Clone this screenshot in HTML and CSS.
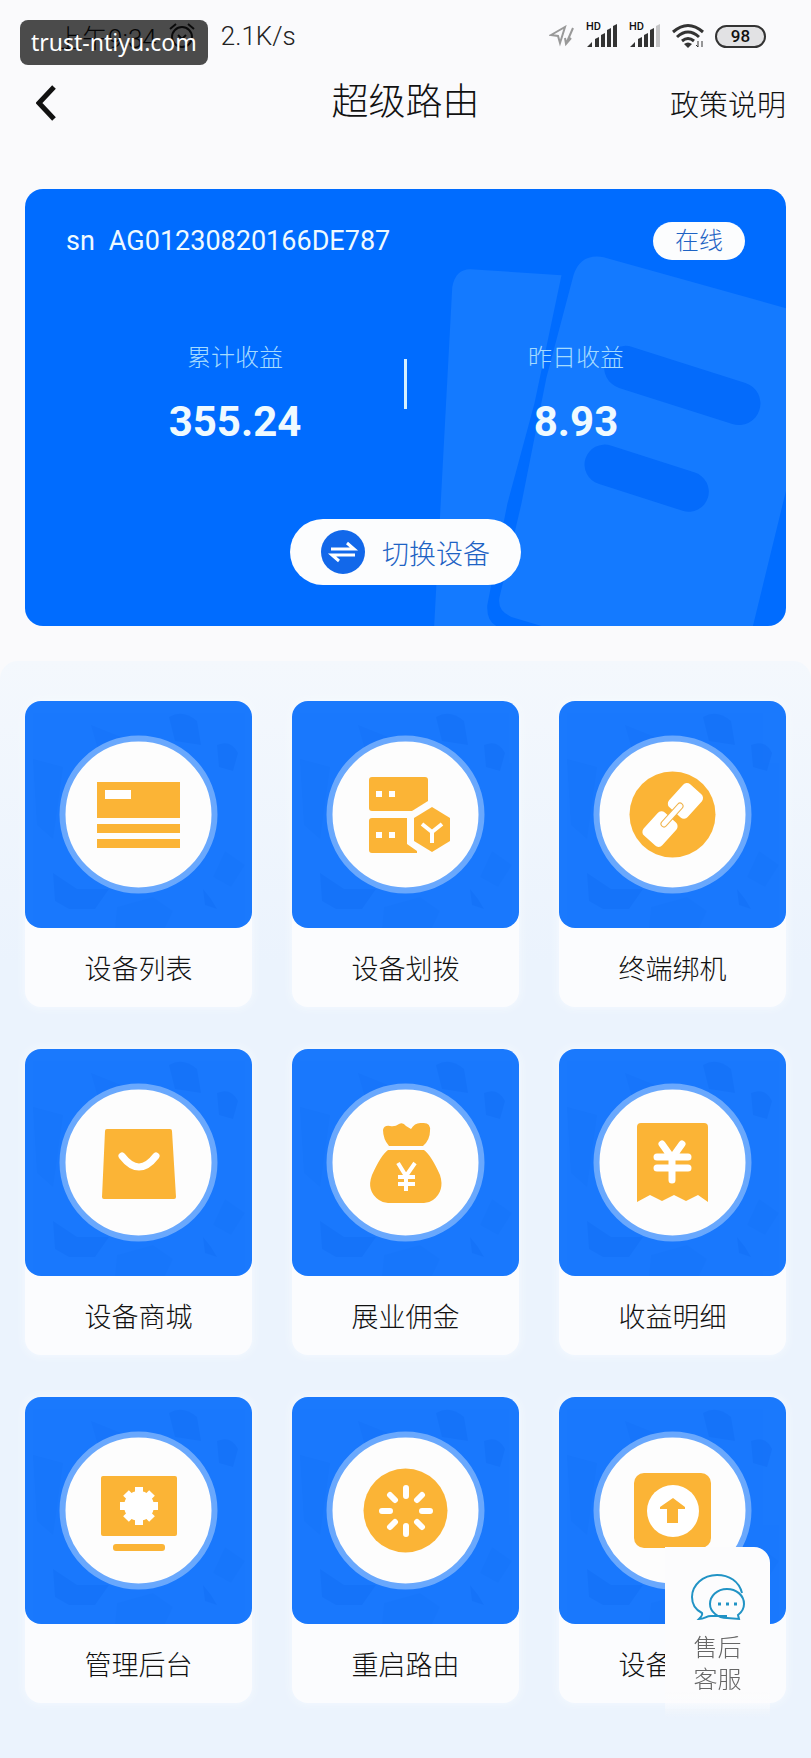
FILE: index.html
```html
<!DOCTYPE html>
<html lang="zh-CN">

<head>
	<meta charset="UTF-8">
	<meta name="viewport" content="width=device-width, initial-scale=1.0">
	<title>超级路由</title>
	<link rel="stylesheet" href="styles.css">
</head>

<body>
	<!-- 公用图形 -->
	<svg class="defs" width="0" height="0" aria-hidden="true">
		<symbol id="tile-bg" viewBox="0 0 227 227">
			<g fill="#0a66f0" opacity=".26">
				<path d="M28 172 L52 188 L84 188 L70 208 L44 208 L30 200 Z" />
				<path d="M144 16 Q158 8 172 20 L176 44 L150 40 Z" />
				<path d="M192 44 Q206 38 213 52 L208 70 L194 66 Z" />
				<path d="M8 58 L38 66 L28 138 L12 124 Z" opacity=".5" />
				<path d="M66 24 L96 36 L74 52 Z" opacity=".6" />
				<path d="M92 206 L128 196 L148 210 L140 227 L90 227 Z" opacity=".4" />
				<path d="M178 188 L186 198 L192 208 L180 204 Z" />
				<path d="M200 150 L220 164 L206 186 L188 176 Z" opacity=".4" />
			</g>
			<circle cx="113.5" cy="113.5" r="76" fill="#fdfdfd" stroke="#69a8fd" stroke-width="6" />
		</symbol>
		<symbol id="signal" viewBox="0 0 32 26">
			<path d="M1 24 L6 19 V24 Z M9 16 L13 14 V24 H9 Z M15 12 L19 10 V24 H15 Z M21 7 L25 5 V24 H21 Z" />
		</symbol>
	</svg>

	<!-- 状态栏 -->
	<div class="status">
		<span class="time">上午9:34</span>
		<svg class="alarm" viewBox="0 0 26 26" fill="none" stroke="#222" stroke-width="2">
			<circle cx="13" cy="14" r="10" />
			<path d="M9 12 L13 16 L17 12 M1 6 L7 1 M19 1 L25 6" />
		</svg>
		<span class="speed">2.1K/s</span>
		<div class="status-icons">
			<svg class="i-loc" viewBox="0 0 26 22" fill="none" stroke="#999" stroke-width="2">
				<path d="M2 10 L16 2 L11 18 L9 11 Z M17 19 L24 3 M16 13 L17 19 L22 13" />
			</svg>
			<div class="sim">
				<span>HD</span>
				<svg viewBox="0 0 32 26" fill="#333">
					<use href="#signal" />
					<path d="M27 3 L31 1 V24 H27 Z" />
				</svg>
			</div>
			<div class="sim">
				<span>HD</span>
				<svg viewBox="0 0 32 26" fill="#333">
					<use href="#signal" />
					<path d="M27 3 L31 1 V24 H27 Z" fill="#c4c4c6" />
				</svg>
			</div>
			<svg class="i-wifi" viewBox="0 0 32 26" fill="none" stroke="#333" stroke-width="3">
				<path d="M1 9 Q16 -4 31 9 M5 14 Q16 4 27 14 M10 18 Q16 13 22 18" />
				<path d="M12 21 Q16 18 20 21 L16 25 Z" fill="#333" stroke="none" />
				<path d="M26 18 V24 L24 22 M30 24 V18" stroke-width="1" />
			</svg>
			<span class="battery">98</span>
		</div>
		<div class="site">trust-ntiyu.com</div>
	</div>

	<!-- 标题栏 -->
	<header class="header">
		<button class="back" type="button" aria-label="返回">
			<svg viewBox="0 0 20 36" fill="none" stroke="#111" stroke-width="5">
				<path d="M18 2 L3 18 L18 34" />
			</svg>
		</button>
		<h1>超级路由</h1>
		<a class="policy" href="#">政策说明</a>
	</header>

	<!-- 设备收益 -->
	<section class="card">
		<svg class="card-bg" viewBox="0 0 761 436" preserveAspectRatio="xMaxYMax slice" aria-hidden="true">
			<g fill="#147aff">
				<path d="M446 80 L537 86 L510 214 L483 314 L463 415 Q462 431 472 436 H410 L428 98 Q431 80 446 80 Z" />
				<path d="M579 68 L761 119 V301 L728 436 H517 L487 427 Q473 421 475 408 L497 314 L522 188 L549 86 Q556 64 579 68 Z" />
			</g>
			<g stroke="#046bfb" stroke-linecap="round">
				<path d="M601 178 L714 214" stroke-width="43" />
				<path d="M580 275 L664 302" stroke-width="40" />
			</g>
		</svg>
		<div class="device">
			<span>sn</span>
			<span class="sn">AG01230820166DE787</span>
			<span class="state">在线</span>
		</div>
		<div class="income">
			<div class="item">
				<p>累计收益</p>
				<strong>355.24</strong>
			</div>
			<div class="line"></div>
			<div class="item">
				<p>昨日收益</p>
				<strong>8.93</strong>
			</div>
		</div>
		<button class="switch" type="button">
			<svg viewBox="0 0 44 44" aria-hidden="true">
				<circle cx="22" cy="22" r="22" fill="#1268ea" />
				<path d="M10 19 H33 L26 13 M34 25 H11 L18 31" fill="none" stroke="#fff" stroke-width="3" />
			</svg>
			切换设备
		</button>
	</section>

	<!-- 功能菜单 -->
	<nav class="menu">
		<a href="#">
			<svg viewBox="0 0 227 227" fill="#fbb436">
				<use href="#tile-bg" />
				<path d="M72 81 H155 V117 H72 Z M72 123 H155 V132 H72 Z M72 138 H155 V147 H72 Z" />
				<path d="M80 89 H106 V98 H80 Z" fill="#fff" />
			</svg>
			<span>设备列表</span>
		</a>
		<a href="#">
			<svg viewBox="0 0 227 227" fill="#fbb436">
				<use href="#tile-bg" />
				<path d="M80 76 H133 Q136 76 136 79 V100 L120 110 H80 Q77 110 77 107 V79 Q77 76 80 76 Z" />
				<path d="M80 117 H115 V143 L125 150 V152 H80 Q77 152 77 149 V120 Q77 117 80 117 Z" />
				<path d="M140 106 L158 117 V140 L140 151 L122 140 V117 Z" />
				<path d="M84 90 h6 v6 h-6 Z M97 90 h6 v6 h-6 Z M84 131 h6 v6 h-6 Z M97 131 h6 v6 h-6 Z" fill="#fff" />
				<path d="M130 123 L140 131 L150 123 M140 130 V142" fill="none" stroke="#fff" stroke-width="4" />
			</svg>
			<span>设备划拨</span>
		</a>
		<a href="#">
			<svg viewBox="0 0 227 227" fill="#fbb436">
				<use href="#tile-bg" />
				<circle cx="113.5" cy="113.5" r="43" />
				<g transform="rotate(42 113 114)" fill="#fff">
					<rect x="101" y="79" width="25" height="31" rx="5" />
					<rect x="101" y="117" width="25" height="31" rx="5" />
					<rect x="110" y="99" width="6" height="30" rx="3" stroke="#f0b550" stroke-width="1" />
				</g>
			</svg>
			<span>终端绑机</span>
		</a>
		<a href="#">
			<svg viewBox="0 0 227 227" fill="#fbb436">
				<use href="#tile-bg" />
				<path d="M82 80 H145 Q147 80 147 82 L151 148 Q151 150 149 150 H79 Q77 150 77 148 L80 82 Q80 80 82 80 Z" />
				<path d="M97 107 Q114 129 131 107" fill="none" stroke="#fff" stroke-width="7" stroke-linecap="round" />
			</svg>
			<span>设备商城</span>
		</a>
		<a href="#">
			<svg viewBox="0 0 227 227" fill="#fbb436">
				<use href="#tile-bg" />
				<path d="M97 97 Q91 90 91 81 Q92 76 98 77 Q103 78 107 75 Q111 73 114 77 L119 80 Q123 73 130 74 Q139 73 138 82 Q138 91 131 97 Z" />
				<path d="M96 101 H132 Q139 106 148 126 Q153 142 141 151 Q137 154 132 154 H96 Q91 154 87 151 Q74 142 80 126 Q89 106 96 101 Z" />
				<path d="M106 114 L114 127 L123 114 M114 127 V142 M106 128 H123 M106 135 H123" fill="none" stroke="#fff" stroke-width="4" />
			</svg>
			<span>展业佣金</span>
		</a>
		<a href="#">
			<svg viewBox="0 0 227 227" fill="#fbb436">
				<use href="#tile-bg" />
				<path d="M82 74 H145 Q149 74 149 78 V153 L139 146 L127 152 L115 146 L103 152 L91 146 L78 153 V78 Q78 74 82 74 Z" />
				<path d="M103 95 L113 109 L123 95 M113 109 V131 M98 108 H129 M98 119 H129" fill="none" stroke="#fff" stroke-width="7" stroke-linecap="round" />
			</svg>
			<span>收益明细</span>
		</a>
		<a href="#">
			<svg viewBox="0 0 227 227" fill="#fbb436">
				<use href="#tile-bg" />
				<rect x="76" y="79" width="76" height="60" rx="2" />
				<rect x="88" y="147" width="52" height="7" rx="3" />
				<circle cx="114" cy="109" r="15" fill="#fff" />
				<path d="M114 90 V128 M95 109 H133 M101 96 L127 122 M127 96 L101 122" stroke="#fff" stroke-width="8" />
			</svg>
			<span>管理后台</span>
		</a>
		<a href="#">
			<svg viewBox="0 0 227 227" fill="#fbb436">
				<use href="#tile-bg" />
				<circle cx="113.5" cy="113.5" r="42" />
				<path d="M114 91 V99 M114 129 V137 M90 114 H98 M130 114 H138 M98 98 L103 103 M125 125 L130 130 M130 98 L125 103 M103 125 L98 130" fill="none" stroke="#fff" stroke-width="6" stroke-linecap="round" />
			</svg>
			<span>重启路由</span>
		</a>
		<a href="#">
			<svg viewBox="0 0 227 227" fill="#fbb436">
				<use href="#tile-bg" />
				<rect x="75" y="76" width="77" height="75" rx="10" />
				<circle cx="114" cy="114" r="26" fill="#fff" />
				<path d="M114 101 L126 110 V112 H119 V126 H108 V112 H101 V110 Z" />
			</svg>
			<span>设备升级</span>
		</a>
	</nav>

	<!-- 悬浮客服 -->
	<a class="service" href="#">
		<svg viewBox="0 0 54 48" fill="none" stroke="#2193c5" stroke-width="2" aria-hidden="true">
			<path d="M51 20 C48 8 38 2 26 2 C12 2 1 12 1 24 C1 31 5 37 11 40 C12 42 10 44 8 46 C14 46 15 43 20 43 H36" />
			<path d="M47 42 C51 39 53 35 53 31 C53 22 45 16 36 16 C26 16 19 23 19 31 C19 39 27 45 36 45 L48 46 Z" />
			<path d="M27 31 H30 M35 31 H38 M43 31 H46" stroke-width="3" />
		</svg>
		<span>售后<br>客服</span>
	</a>
</body>

</html>
```

FILE: styles.css
```css
* {
	box-sizing: border-box;
}

body {
	display: flex;
	flex-direction: column;
	min-height: 100vh;
	margin: 0;
	background-color: #FAFAFC;
	color: #111;
	font-family: Roboto, "Noto Sans CJK SC", sans-serif;
	font-weight: 300;
}

a {
	color: inherit;
	text-decoration: none;
}

button {
	padding: 0;
	border: none;
	font: inherit;
	cursor: pointer;
}

svg {
	display: block;
}

.defs {
	position: absolute;
}

/* 状态栏 */
.status {
	position: relative;
	display: flex;
	align-items: center;
	height: 72px;
	padding: 0 45px 0 56px;
	font-size: 26px;
}

.alarm {
	width: 26px;
	height: 26px;
	margin: 0 26px 0 12px;
}

.speed {
	color: #222;
}

.status-icons {
	display: flex;
	align-items: center;
	gap: 11px;
	margin-left: auto;
}

.i-loc {
	width: 26px;
	height: 22px;
}

.sim {
	position: relative;
}

.sim span {
	position: absolute;
	top: -2px;
	left: 0;
	font-size: 11px;
	font-weight: 500;
	line-height: 11px;
}

.sim svg,
.i-wifi {
	width: 32px;
	height: 26px;
}

.battery {
	width: 51px;
	height: 23px;
	border: 2px solid #333;
	border-radius: 12px;
	background-color: #E2E2E4;
	font-size: 17px;
	font-weight: 500;
	line-height: 19px;
	text-align: center;
}

.site {
	position: absolute;
	top: 20px;
	left: 20px;
	padding: 0 11px;
	border-radius: 8px;
	background-color: rgba(0, 0, 0, .7);
	color: #FFF;
	font-family: "Noto Sans", sans-serif;
	font-size: 23px;
	font-weight: 400;
	line-height: 45px;
}

/* 标题栏 */
.header {
	display: grid;
	grid-template-columns: 1fr auto 1fr;
	align-items: center;
	height: 62px;
	padding: 0 25px;
}

.header h1 {
	margin: 0;
	font-size: 37px;
	font-weight: 300;
	line-height: 54px;
}

.back {
	width: 20px;
	height: 36px;
	margin-left: 11px;
	background: none;
}

.policy {
	justify-self: end;
	font-size: 29px;
}

/* 设备收益 */
.card {
	position: relative;
	margin: 55px 25px 0;
	padding: 33px 41px 41px;
	border-radius: 18px;
	background-color: #006CFF;
	color: #EFFAFF;
	overflow: hidden;
}

.card-bg {
	position: absolute;
	top: 0;
	left: 0;
	width: 100%;
	height: 100%;
}

.device,
.income,
.switch {
	position: relative;
}

.device {
	display: flex;
	align-items: center;
	gap: 14px;
	font-size: 27px;
	font-weight: 400;
	line-height: 38px;
}

.state {
	margin-left: auto;
	padding: 0 22px;
	border-radius: 19px;
	background-color: #FCFDFE;
	color: #1E63C4;
	font-size: 24px;
	font-weight: 300;
	line-height: 38px;
}

.income {
	display: flex;
	align-items: center;
	margin-top: 78px;
}

.income .item {
	flex: 1;
	text-align: center;
}

.income p {
	margin: 0 0 19px;
	color: #A5DBFF;
	font-size: 24px;
	line-height: 40px;
}

.income strong {
	display: block;
	font-size: 42px;
	font-weight: 700;
	line-height: 50px;
}

.income .line {
	width: 3px;
	height: 50px;
	margin-bottom: 18px;
	background-color: #D5F0FF;
}

.switch {
	display: flex;
	align-items: center;
	gap: 17px;
	height: 66px;
	margin: 72px auto 0;
	padding: 0 31px;
	border-radius: 33px;
	background-color: #FCFDFE;
	color: #1E63C4;
	font-size: 27px;
}

.switch svg {
	width: 44px;
	height: 44px;
}

/* 功能菜单 */
.menu {
	flex: 1;
	display: grid;
	grid-template-columns: repeat(3, 1fr);
	align-content: start;
	gap: 42px 40px;
	margin-top: 35px;
	padding: 40px 25px 56px;
	border-radius: 18px 18px 0 0;
	background-image: linear-gradient(#F4F8FD, #EBF3FD 300px);
}

.menu a {
	border-radius: 16px;
	background-color: #FBFCFE;
	box-shadow: 0 0 10px #F7FBFE;
}

.menu a > svg {
	width: 100%;
	border-radius: 16px;
	background-color: #1A79FD;
}

.menu span {
	display: block;
	padding: 22px 0 17px;
	font-size: 27px;
	line-height: 40px;
	text-align: center;
}

/* 悬浮客服 */
.service {
	position: fixed;
	right: 41px;
	bottom: 40px;
	display: flex;
	flex-direction: column;
	align-items: center;
	gap: 11px;
	width: 105px;
	padding: 26px 0 22px;
	border-radius: 0 16px 0 0;
	background-image: linear-gradient(#FCFCFD 85%, rgba(252, 252, 253, 0));
	color: #666;
	font-size: 24px;
	line-height: 32px;
}

.service svg {
	width: 54px;
	height: 48px;
}
```
